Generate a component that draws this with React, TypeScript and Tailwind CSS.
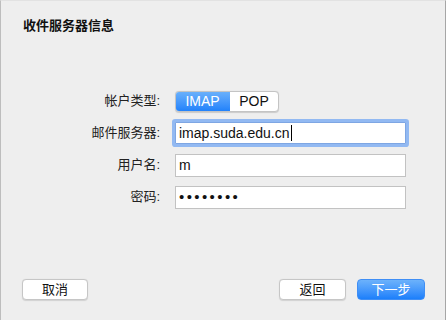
import React from "react";

const font = { fontFamily: '"Liberation Sans", "Noto Sans CJK SC", Arial, sans-serif' };

function Label({ children }: { children: React.ReactNode }) {
  return (
    <div className="w-[162px] pr-[3px] text-right text-[13px] text-[#222]">{children}</div>
  );
}

export default function App() {
  return (
    <div
      style={font}
      className="w-[446px] h-[320px] bg-[#eeeeee] border-l border-r border-t border-l-[#bdbdbd] border-r-[#a6a6a6] border-t-[#e2e2e2] flex flex-col text-[#1a1a1a]"
    >
      <div className="pt-[16px] pl-[22px] text-[13px] font-bold leading-[18px] text-[#111]">收件服务器信息</div>

      <div className="mt-[50px] flex flex-col">
        <div className="h-[32px] flex items-center">
          <Label>帐户类型:</Label>
          <div className="ml-[12px] flex h-[21px] rounded-[4px] border border-[#c4c4c4] bg-white overflow-hidden shadow-[0_0.5px_1px_rgba(0,0,0,0.15)]">
            <div className="w-[55px] -my-px -ml-px flex items-center justify-center text-[14px] text-white bg-gradient-to-b from-[#6cb2fb] to-[#1a7ffb] rounded-l-[4px]">
              IMAP
            </div>
            <div className="w-[48px] flex items-center justify-center text-[14px] text-[#111]">POP</div>
          </div>
        </div>

        <div className="h-[32px] flex items-center">
          <Label>邮件服务器:</Label>
          <div className="ml-[12px] w-[231px] h-[22px] bg-white border border-[#7ea6e3] rounded-[1px] shadow-[0_0_0_3px_#92b9f2] flex items-center pl-[3px] text-[14px] text-[#111]">
            imap.suda.edu.cn
            <span className="ml-[1px] inline-block w-[1px] h-[16px] bg-black" />
          </div>
        </div>

        <div className="h-[32px] flex items-center">
          <Label>用户名:</Label>
          <div className="ml-[12px] w-[231px] h-[23px] bg-white border border-[#c2c2c2] flex items-center pl-[3px] text-[14px] text-[#111]">
            m
          </div>
        </div>

        <div className="h-[32px] flex items-center">
          <Label>密码:</Label>
          <div className="ml-[12px] w-[231px] h-[23px] bg-white border border-[#c2c2c2] flex items-center pl-[3px] text-[15px] text-[#111] tracking-[2.4px]">
            ••••••••
          </div>
        </div>
      </div>

      <div className="flex-1" />

      <div className="flex items-center pb-[20px] pl-[21px] pr-[20px]">
        <button className="w-[66px] h-[21px] rounded-[4px] bg-white border border-[#c6c6c6] shadow-[0_0.5px_1px_rgba(0,0,0,0.12)] text-[13px] text-[#111] flex items-center justify-center">
          取消
        </button>
        <div className="flex-1" />
        <button className="w-[67px] h-[21px] rounded-[4px] bg-white border border-[#c6c6c6] shadow-[0_0.5px_1px_rgba(0,0,0,0.12)] text-[13px] text-[#111] flex items-center justify-center">
          返回
        </button>
        <button className="ml-[11px] w-[68px] h-[21px] rounded-[4px] bg-gradient-to-b from-[#6cb2fb] to-[#1a7ffb] border border-[#3f8ef5] text-[13px] text-white flex items-center justify-center">
          下一步
        </button>
      </div>
    </div>
  );
}
